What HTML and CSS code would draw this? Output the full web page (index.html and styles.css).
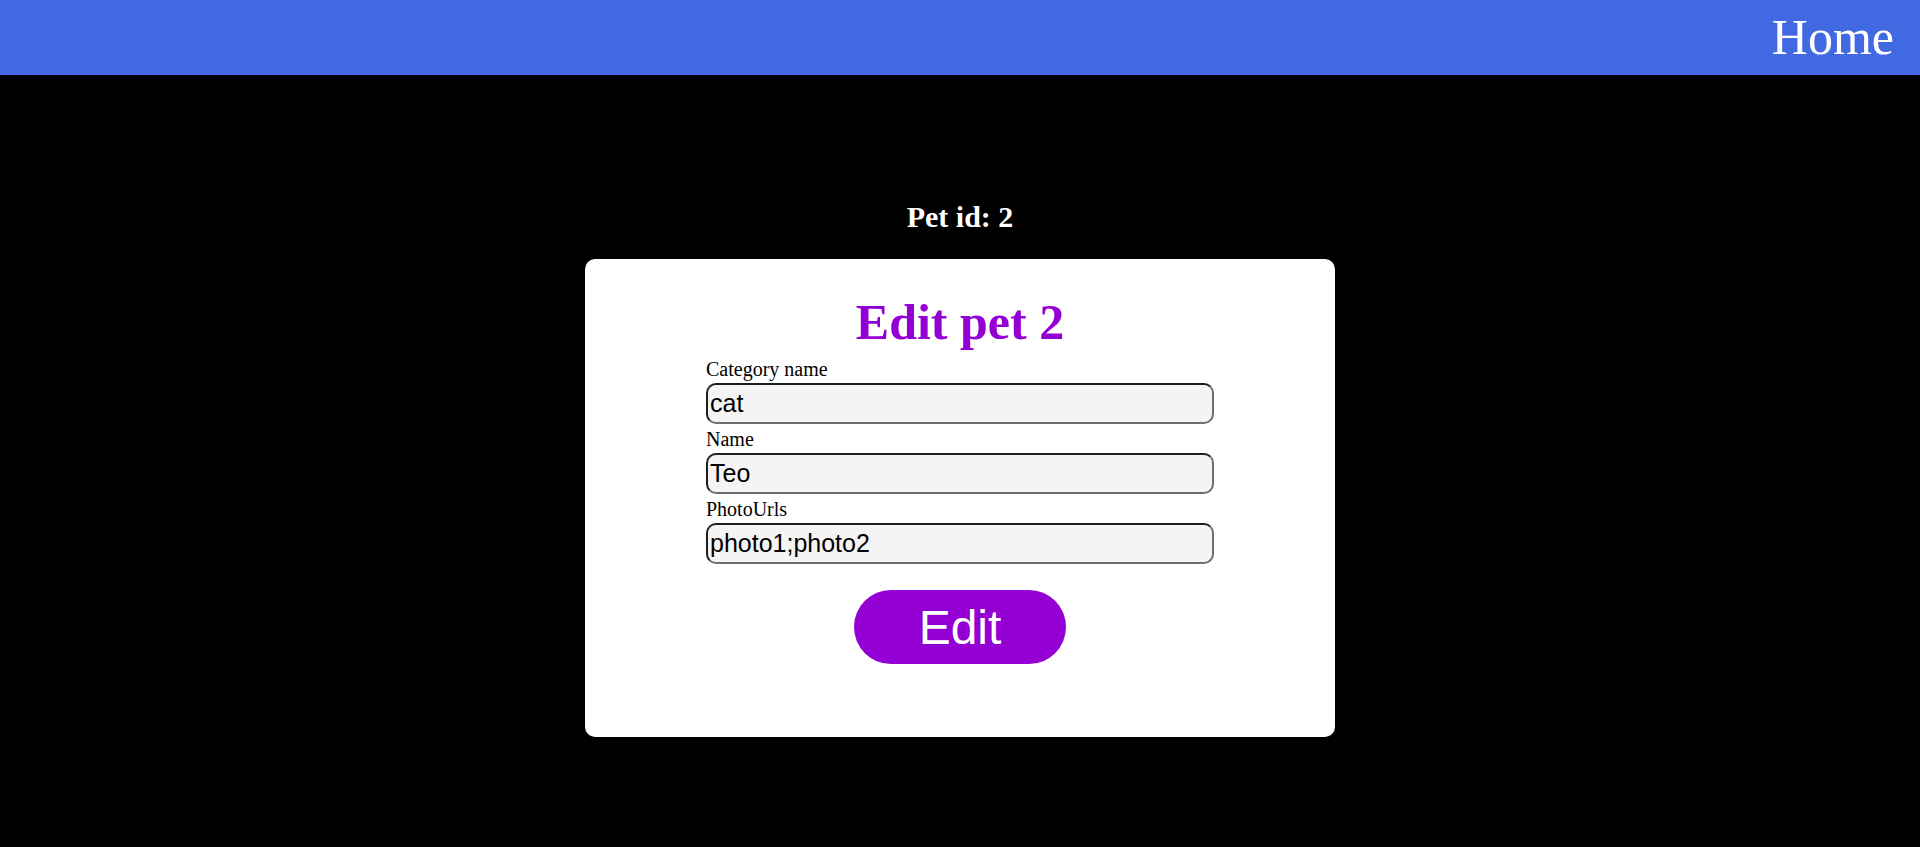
FILE: index.html
```html
<!DOCTYPE html>
<html lang="en">
<head>
<meta charset="utf-8">
<title>Edit pet</title>
<link rel="stylesheet" href="styles.css">
</head>
<body>
<header class="topbar">
  <a class="home-link" href="#">Home</a>
</header>
<main class="page">
  <h2 class="pet-id">Pet id: 2</h2>
  <section class="card">
    <h1 class="card-title">Edit pet 2</h1>
    <form class="pet-form">
      <label class="field-label" for="category">Category name</label>
      <input class="field-input" id="category" type="text" value="cat">
      <label class="field-label" for="name">Name</label>
      <input class="field-input" id="name" type="text" value="Teo">
      <label class="field-label" for="photos">PhotoUrls</label>
      <input class="field-input" id="photos" type="text" value="photo1;photo2">
      <button class="submit-btn" type="button">Edit</button>
    </form>
  </section>
</main>
</body>
</html>
```

FILE: styles.css
```css
html, body {
  margin: 0;
  padding: 0;
}

body {
  background: #000;
  font-family: "Liberation Serif", "Times New Roman", serif;
  color: #000;
}

.topbar {
  height: 75px;
  background: #4169e1;
  display: flex;
  justify-content: flex-end;
  align-items: center;
  padding-right: 26px;
}

.home-link {
  color: #fff;
  text-decoration: none;
  font-size: 50px;
  line-height: 75px;
}

.page {
  padding-top: 125px;
  display: flex;
  flex-direction: column;
  align-items: center;
}

.pet-id {
  margin: 0 0 25px;
  color: #fff;
  font-size: 30px;
  line-height: 34px;
  font-weight: bold;
}

.card {
  box-sizing: border-box;
  width: 750px;
  background: #fff;
  border-radius: 10px;
  padding: 34px 0 73px;
}

.card-title {
  margin: 0 0 7px;
  text-align: center;
  color: #9400d3;
  font-size: 50px;
  line-height: 58px;
  font-weight: bold;
}

.pet-form {
  width: 508px;
  margin: 0 auto;
  display: flex;
  flex-direction: column;
}

.field-label {
  font-size: 20px;
  line-height: 22px;
  margin-bottom: 3px;
}

.field-input {
  box-sizing: border-box;
  width: 508px;
  height: 41px;
  margin: 0 0 4px;
  padding: 1px 2px;
  background: #f4f4f4;
  border: 2px solid;
  border-color: #1e1e1e #6f6f6f #6f6f6f #1e1e1e;
  border-radius: 10px;
  font-family: "Liberation Sans", Arial, sans-serif;
  font-size: 25px;
  color: #000;
}

.submit-btn {
  align-self: center;
  width: 212px;
  height: 74px;
  margin-top: 22px;
  border: none;
  border-radius: 37px;
  background: #9400d3;
  color: #fff;
  font-family: "Liberation Sans", Arial, sans-serif;
  font-size: 48px;
  padding: 0;
}
```
